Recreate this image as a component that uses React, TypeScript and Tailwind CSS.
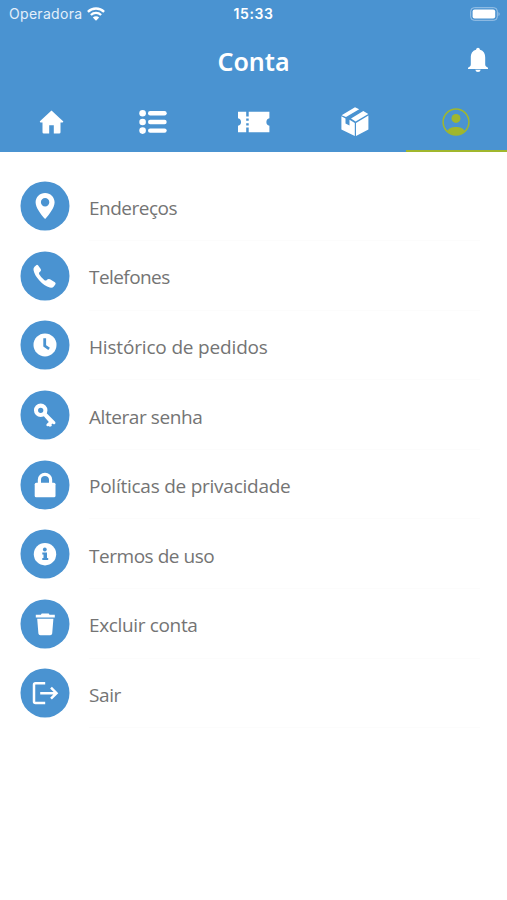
import React from "react";

const blue = "#4a93d1";

const Pin = () => (
  <path fillRule="evenodd" d="M24.6 11.4c-5.3 0-9.5 4.1-9.5 9.3 0 5.5 5.2 11.8 9.5 16.9 4.3-5.100 9.500-11.400 9.500-16.900 0-5.200-4.200-9.300-9.500-9.300zm0 5.200a4.200 4.200 0 1 1 0 8.400 4.200 4.200 0 0 1 0-8.400z" />
);
const Phone = () => (
  <path d="M14 15.200l2-1.700q.8-.5 1.500.3l2.700 3.700q.8 1.300-.2 2.300l-1.300 1.300q-.5.700 0 1.600 1.800 3.300 5.300 6 .9.700 1.700.2l1.500-1.100q1.100-.8 2.300 0l4.900 3q1.300.9.400 2.100l-1.500 2q-1.300 1.700-4 1.100c-3.600-.8-7.300-3.500-10.400-6.900-3.300-3.700-5.300-7.300-5.900-10.600q-.3-2 1-3.300z" />
);
const Clock = () => (
  <>
    <circle cx="24.500" cy="24.400" r="11.500" />
    <path d="M24.200 17.800v7.500l4.400 3" fill="none" stroke={blue} strokeWidth="2.800" />
  </>
);
const Key = () => (
  <>
    <circle cx="20.200" cy="19.800" r="4.700" fill="none" stroke="#fff" strokeWidth="4.100" />
    <path d="M22.500 24.800l2.900-2.800 9.200 9.300q.7.800.1 1.900-1.500 1.100-3-.1l-.7.800q.8 1-.2 1.900l-1.400.5-1.500-.8q-1.400.6-2-.6-.2-.9.500-1.600l1.900-1.800z" />
  </>
);
const Lock = () => (
  <>
    <rect x="14.200" y="22.300" width="20.800" height="14.400" rx="1.500" />
    <path d="M18.900 24v-4.800a5.600 5.300 0 0 1 11.200 0V24" fill="none" stroke="#fff" strokeWidth="3.200" />
  </>
);
const Info = () => (
  <>
    <circle cx="24.500" cy="24.700" r="11.200" />
    <circle cx="24.300" cy="20" r="1.900" fill={blue} />
    <path d="M21.800 22.900h4.700v5.500h1.200v2.100h-5.900v-2.100H23v-3.400h-1.200z" fill={blue} />
  </>
);
const Trash = () => (
  <path d="M15.300 15.200h5.100l.8-1.300h7l.8 1.300h5.300v2.700h-19zM16.700 19.200h16.200l-1.200 14.700q-.2 1.800-2 1.800h-9.800q-1.800 0-2-1.800z" />
);
const Exit = () => (
  <path d="M24.700 14.700H15q-1.500 0-1.500 1.500v16.900q0 1.500 1.500 1.500h9.700M19.700 24.700H36M30.500 19.200l5.500 5.500-5.500 5.500" fill="none" stroke="#fff" strokeWidth="2.500" />
);

const items = [
  { label: "Endereços", Icon: Pin, track: "tracking-[-0.5px]" },
  { label: "Telefones", Icon: Phone, track: "tracking-[-0.57px]" },
  { label: "Histórico de pedidos", Icon: Clock, track: "tracking-[-0.17px]" },
  { label: "Alterar senha", Icon: Key, track: "tracking-[-0.43px]" },
  { label: "Políticas de privacidade", Icon: Lock, track: "tracking-[-0.25px]" },
  { label: "Termos de uso", Icon: Info, track: "tracking-[-0.46px]" },
  { label: "Excluir conta", Icon: Trash, track: "tracking-[-0.35px]" },
  { label: "Sair", Icon: Exit, track: "tracking-[-0.4px]" },
];

const HomeTab = () => (
  <path d="M16.500 2.500L4.900 13.200q-.4 1 .7 1.200H7.500V24.200q0 1.300 1.300 1.300h5.400v-8.300h4.600v8.300h5.400q1.300 0 1.300-1.300v-9.800h2q1.100-.2.700-1.200l-3.400-3z" />
);
const ListTab = () => (
  <>
    {[5.300, 14, 22.600].map((y) => (
      <g key={y}>
        <circle cx="5.600" cy={y} r="3.300" />
        <rect x="11" y={y - 2.200} width="18.700" height="4.400" rx="2.200" />
      </g>
    ))}
  </>
);
const TicketTab = () => (
  <>
    <path d="M0 3.700h8.200v20.600H0v-6.500a3.900 3.900 0 0 0 0-7.600zM10.700 3.700H31.400v6.500a3.900 3.900 0 0 0 0 7.600v6.500H10.700z" />
    <path d="M8 8.500h3v2H8zM8 12.800h3v2.400H8zM8 17.500h3v2H8z" />
  </>
);
const BoxTab = () => (
  <path d="M2.600 7.200L16-.7l4.200 2L7 9zM12 10.500L24.300 3l5 3-12.700 7.500zM2.400 8.300l4.100 2.200v5.100l4 2v-5.800l5.300 3.100V28L2.400 21.500zM17 14.900l12.400-7.400v14L17 28z" />
);
const UserTab = () => (
  <>
    <circle cx="16" cy="14" r="12.900" fill="none" stroke="#a0b72d" strokeWidth="1.500" />
    <circle cx="16" cy="10.400" r="4.500" />
    <path d="M7.200 23.100c1.300-3 4.700-4.200 8.800-4.200s7.500 1.200 8.800 4.200A12.900 12.900 0 0 1 7.200 23.100z" />
  </>
);
const tabs = [HomeTab, ListTab, TicketTab, BoxTab, UserTab];

export default function App() {
  return (
    <div className="h-[900px] w-[507px] overflow-hidden bg-white">
      <header className="flex h-[152px] flex-col bg-[#4a93d1] text-white">
        <div className="grid h-[27px] grid-cols-3 items-center font-['Inter','Liberation_Sans',sans-serif]">
          <div className="flex items-center gap-[5px] pl-[9px]">
            <span className="text-[14px] leading-[27px] tracking-[0.3px] text-[#e4effa]">Operadora</span>
            <svg width="18" height="14" viewBox="0 0 18 14" fill="none" stroke="#fff" strokeWidth="2.300">
              <path d="M.9 4.900a11.400 11.400 0 0 1 16.200 0M3.900 8a7.200 7.200 0 0 1 10.200 0" />
              <path d="M9 13.700L5.800 10.500a4.500 4.500 0 0 1 6.400 0z" fill="#fff" stroke="none" />
            </svg>
          </div>
          <span className="text-center text-[14px] font-semibold tracking-[0.6px]">15:33</span>
          <svg className="ml-auto mr-[6px]" width="31" height="14" viewBox="0 0 31 14">
            <rect x=".7" y=".7" width="26.600" height="12.600" rx="3.500" fill="none" stroke="#9dc4e7" strokeWidth="1" />
            <rect x="2.600" y="2.500" width="22.600" height="9" rx="2" fill="#fff" />
            <path d="M28.500 4.900q2.300 2.100 0 4.200z" fill="#9dc4e7" />
          </svg>
        </div>
        <div className="grid h-[65px] grid-cols-3 items-center">
          <span />
          <h1 className="pt-[3px] text-center font-['Noto_Sans','Open_Sans',sans-serif] text-[25px] font-semibold leading-[32px]">Conta</h1>
          <svg className="ml-auto mr-[18px]" width="22" height="26" viewBox="0 0 22 26" fill="#fff">
            <path d="M11 .8q1.700 0 2 1.900c3.700 1 5.200 3.900 5.200 7.900v6.700c0 1.700.9 2.700 2.800 3.400v1.300H1v-1.300c1.900-.7 2.800-1.700 2.800-3.400v-6.700c0-4 1.500-6.900 5.200-7.900q.3-1.900 2-1.900zM8.300 22.700h5.400q-.4 2.300-2.700 2.300t-2.700-2.300z" />
          </svg>
        </div>
        <nav className="grid h-[60px] grid-cols-5">
          {tabs.map((Tab, i) => (
            <div
              key={i}
              className={i === 4 ? "flex justify-center border-b-2 border-[#a0b72d] pt-[16px] text-[#a0b72d]" : "flex justify-center pl-px pt-[16px]"}
            >
              <svg className="overflow-visible" width="32" height="29" viewBox="0 0 32 29" fill="currentColor">
                <Tab />
              </svg>
            </div>
          ))}
        </nav>
      </header>
      <main className="pl-5 pr-[27px] pt-[19.500px]">
        {items.map(({ label, Icon, track }) => (
          <div key={label} className="flex h-[69.590px] items-center gap-[19px]">
            <svg className="shrink-0" width="50" height="50" viewBox="-0.5 -0.5 50 50" fill="#fff">
              <circle cx="24.500" cy="24.500" r="24.500" fill={blue} />
              <Icon />
            </svg>
            <div className="flex h-full flex-1 items-center border-b border-[#fcfcfc]">
              <span className={`pt-[4px] font-['Open_Sans','Noto_Sans',sans-serif] text-[19px] leading-[26px] text-[#747474] ${track}`}>{label}</span>
            </div>
          </div>
        ))}
      </main>
    </div>
  );
}
